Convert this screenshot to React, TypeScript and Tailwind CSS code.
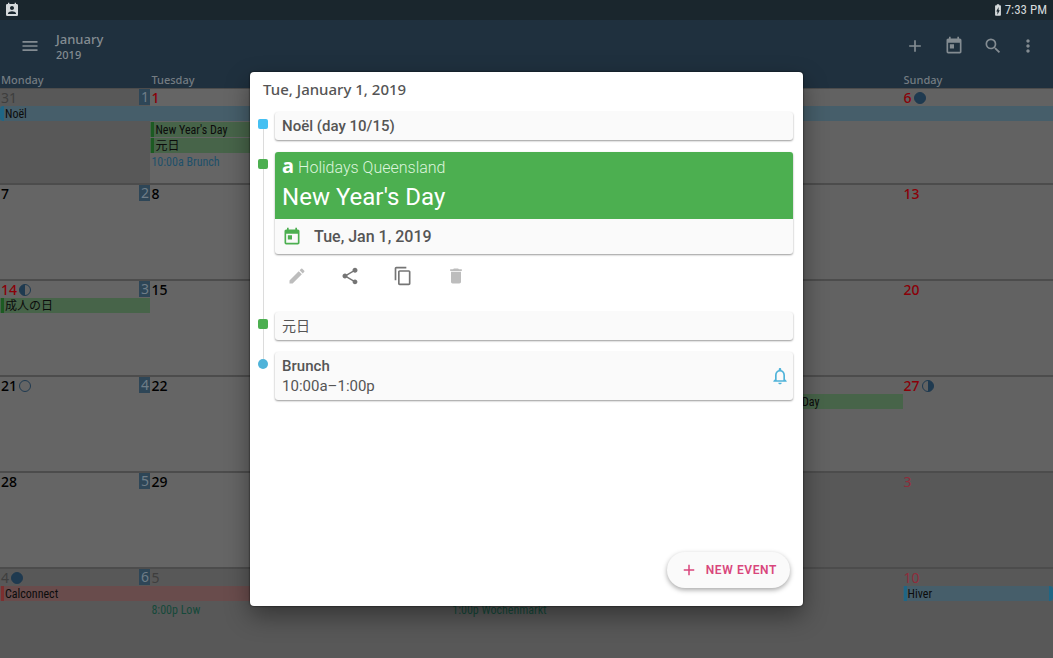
import clsx from "clsx"
import type { ReactNode } from "react"
import {
  MdAdd,
  MdBatteryChargingFull,
  MdContentCopy,
  MdDelete,
  MdEdit,
  MdMenu,
  MdMoreVert,
  MdNotificationsNone,
  MdPermContactCalendar,
  MdSearch,
  MdShare,
  MdToday,
} from "react-icons/md"

type Phase = "new" | "first" | "full" | "last"
type Tone = "blue" | "green" | "red"

interface Entry {
  label?: string
  tone?: Tone
  start?: boolean
  before?: boolean
  after?: boolean
  text?: "blue" | "green"
}

// Days that lie under the open dialog carry no number
interface Day {
  n?: number
  other?: boolean
  holiday?: boolean
  moon?: Phase
  entries?: Entry[]
}

interface Week {
  no: number
  days: Day[]
}

const WEEKDAYS = ["Monday", "Tuesday", "", "", "", "", "Sunday"]

const noel: Entry = { tone: "blue" }
const calconnect: Entry = { tone: "red" }

const WEEKS: Week[] = [
  {
    no: 1,
    days: [
      { n: 31, other: true, entries: [{ label: "Noël", tone: "blue", before: true }] },
      {
        n: 1,
        holiday: true,
        entries: [
          noel,
          { label: "New Year's Day", tone: "green", start: true },
          { label: "元日", tone: "green", start: true },
          { label: "10:00a Brunch", text: "blue" },
        ],
      },
      { entries: [noel] },
      { entries: [noel] },
      { entries: [noel] },
      { entries: [noel] },
      { n: 6, moon: "new", entries: [noel] },
    ],
  },
  { no: 2, days: [{ n: 7 }, { n: 8 }, {}, {}, {}, {}, { n: 13 }] },
  {
    no: 3,
    days: [
      { n: 14, holiday: true, moon: "first", entries: [{ label: "成人の日", tone: "green", start: true }] },
      { n: 15 },
      {},
      {},
      {},
      {},
      { n: 20 },
    ],
  },
  {
    no: 4,
    days: [
      { n: 21, moon: "full" },
      { n: 22 },
      {},
      {},
      {},
      { entries: [{ label: "Australia Day", tone: "green", start: true }] },
      { n: 27, moon: "last" },
    ],
  },
  {
    no: 5,
    days: [{ n: 28 }, { n: 29 }, {}, {}, { other: true }, { other: true }, { n: 3, other: true }],
  },
  {
    no: 6,
    days: [
      { n: 4, other: true, moon: "new", entries: [{ label: "Calconnect", tone: "red", start: true }] },
      { n: 5, other: true, entries: [calconnect, { label: "8:00p Low", text: "green" }] },
      { other: true, entries: [calconnect] },
      { other: true, entries: [calconnect, { label: "1:00p Wochenmarkt", text: "green" }] },
      { other: true, entries: [calconnect] },
      { other: true },
      { n: 10, other: true, entries: [{ label: "Hiver", tone: "blue", start: true, after: true }] },
    ],
  },
]

const BAR: Record<Tone, string> = {
  blue: "bg-[#465e6a]",
  green: "bg-[#476449]",
  red: "bg-[#694c4c]",
}

const ACCENT: Record<Tone, string> = {
  blue: "bg-[#1f6685]",
  green: "bg-[#1c5a22]",
  red: "bg-[#7c2f2f]",
}

function Moon({ phase }: { phase: Phase }) {
  return (
    <svg viewBox="0 0 12 12" className="size-3 text-[#1f3a50]" aria-hidden="true">
      <circle cx="6" cy="6" r="5.5" fill={phase === "new" ? "currentColor" : "none"} stroke="currentColor" />
      {phase === "first" && <path d="M6 .5a5.5 5.5 0 0 0 0 11z" fill="currentColor" />}
      {phase === "last" && <path d="M6 .5a5.5 5.5 0 0 1 0 11z" fill="currentColor" />}
    </svg>
  )
}

function EntryRow({ entry }: { entry: Entry }) {
  if (!entry.tone) {
    return (
      <div
        className={clsx(
          "h-4 overflow-hidden pl-px whitespace-nowrap",
          entry.text === "blue" ? "text-[#20506a]" : "text-[#16493a]",
        )}
      >
        {entry.label}
      </div>
    )
  }

  return (
    <div className={clsx("mb-px flex h-[15px] overflow-hidden whitespace-nowrap", BAR[entry.tone])}>
      {entry.start && <span className={clsx("mr-px ml-px w-[3px] shrink-0", ACCENT[entry.tone])} />}
      {entry.before && <span className={clsx("mr-px w-1 shrink-0 rounded-l-full", ACCENT[entry.tone])} />}
      <span className="text-[#0c0c0c]">{entry.label}</span>
      {entry.after && <span className={clsx("ml-auto w-1 shrink-0 rounded-r-full", ACCENT[entry.tone])} />}
    </div>
  )
}

function DayCell({ day, column, week }: { day: Day; column: number; week: number }) {
  const red = column === 6 || day.holiday

  return (
    <td
      className={clsx(
        "border-[#4c4c4c] p-0 align-top",
        week === 1 ? "border-t" : "border-t-2",
        day.other ? "bg-[#585858]" : column > 4 ? "bg-[#626262]" : "bg-[#656565]",
      )}
    >
      <div className="flex h-[17px] items-center gap-0.5 pl-px">
        <span
          className={clsx(
            "pt-px text-sm leading-4",
            day.other ? "font-normal" : "font-medium",
            red ? (day.other ? "text-[#8f2c3b]" : "text-[#8a0008]") : day.other ? "text-[#3e3e3e]" : "text-black",
          )}
        >
          {day.n}
        </span>
        {day.moon && <Moon phase={day.moon} />}
        {column === 0 && (
          <span className="ml-auto w-[11px] self-start bg-[#2e4657] text-center text-sm leading-4 text-[#6f7d87]">
            {week}
          </span>
        )}
      </div>
      <div className="font-['Roboto_Condensed',Roboto,'Noto_Sans_CJK_JP',sans-serif] text-xs leading-4">
        {day.entries?.map((entry, i) => (
          <EntryRow key={i} entry={entry} />
        ))}
      </div>
    </td>
  )
}

function StatusBar() {
  return (
    <div className="flex h-5 shrink-0 items-center justify-between bg-[#1a262d] pr-1.5 pl-1 text-[#d5d9db]">
      <MdPermContactCalendar className="size-4" />
      <span className="flex items-center font-['Roboto_Condensed',Roboto,sans-serif] text-[13px]">
        <MdBatteryChargingFull className="size-3.5" />
        7:33 PM
      </span>
    </div>
  )
}

function ToolbarButton({ label, children }: { label: string; children: ReactNode }) {
  return (
    <button type="button" aria-label={label} className="flex size-5 items-center justify-center">
      {children}
    </button>
  )
}

function Toolbar() {
  return (
    <header className="flex h-[52px] shrink-0 items-center bg-[#1f303e] pr-[15px] pl-5 text-[#848c92]">
      <ToolbarButton label="Menu">
        <MdMenu className="size-5" />
      </ToolbarButton>
      <h1 className="ml-4 flex flex-col pt-0.5 font-medium">
        <span className="text-[13px] leading-4">January</span>
        <span className="text-[11px] leading-4">2019</span>
      </h1>
      <div className="ml-auto flex items-center gap-[19px]">
        <ToolbarButton label="Add event">
          <MdAdd className="size-5" />
        </ToolbarButton>
        <ToolbarButton label="Go to today">
          <MdToday className="size-5" />
        </ToolbarButton>
        <ToolbarButton label="Search">
          <MdSearch className="size-5" />
        </ToolbarButton>
        <button type="button" aria-label="More options" className="-ml-1">
          <MdMoreVert className="size-5" />
        </button>
      </div>
    </header>
  )
}

function MonthGrid() {
  return (
    <table className="w-full table-fixed border-separate border-spacing-0">
      <thead>
        <tr>
          {WEEKDAYS.map((name, column) => (
            <th
              key={column}
              scope="col"
              className="h-4 bg-[#1f303e] p-0 pl-px text-left text-[11px] leading-4 font-medium text-[#747c82]"
            >
              {name}
            </th>
          ))}
        </tr>
      </thead>
      <tbody>
        {WEEKS.map((week) => (
          <tr key={week.no} className={week.no === 1 ? "h-[95px]" : "h-24"}>
            {week.days.map((day, column) => (
              <DayCell key={column} day={day} column={column} week={week.no} />
            ))}
          </tr>
        ))}
      </tbody>
    </table>
  )
}

interface TimelineItemProps {
  marker: string
  first?: boolean
  last?: boolean
  children: ReactNode
}

function TimelineItem({ marker, first, last, children }: TimelineItemProps) {
  return (
    <li className="flex gap-[7px]">
      <div className="flex w-2.5 shrink-0 flex-col items-center">
        <span className={clsx("h-[7px] w-px", !first && "bg-[#dcdcdc]")} />
        <span className={clsx("size-2.5", marker)} />
        {!last && <span className="w-px flex-1 bg-[#dcdcdc]" />}
      </div>
      <div className={clsx("min-w-0 flex-1", !last && "pb-3")}>{children}</div>
    </li>
  )
}

const CARD = "rounded-[3px] bg-[#fafafa] shadow-[0_1px_2px_rgba(0,0,0,0.4)]"

function AgendaDialog() {
  return (
    <section
      role="dialog"
      aria-labelledby="agenda-title"
      className="flex h-[83.7%] w-[52.5%] flex-col rounded-sm bg-white pr-2.5 pl-2 font-[Roboto,'Noto_Sans_CJK_JP',sans-serif] text-[#555] shadow-[0_0_2px_rgba(0,0,0,0.9),0_10px_24px_rgba(0,0,0,0.4)]"
    >
      <h2
        id="agenda-title"
        className="h-10 pt-[7px] pl-[5px] font-['Noto_Sans',sans-serif] text-[15px] leading-5 font-medium"
      >
        Tue, January 1, 2019
      </h2>

      <ol>
        <TimelineItem marker="rounded-xs bg-[#45c0f2]" first>
          <div className={clsx(CARD, "h-7 px-[7px] text-[15px] leading-7 font-medium")}>Noël (day 10/15)</div>
        </TimelineItem>

        <TimelineItem marker="rounded-xs bg-[#4caf50]">
          <article className={clsx(CARD, "overflow-hidden")}>
            <div className="bg-[#4caf50] px-[7px] pt-1 pb-1 text-white">
              <p className="flex items-center gap-1 text-base leading-6 font-light text-[#dcf5dd]">
                <span className="w-3 self-start font-['Noto_Sans',sans-serif] text-xl leading-5 font-bold text-white">
                  a
                </span>
                Holidays Queensland
              </p>
              <h3 className="text-2xl leading-[35px]">New Year&apos;s Day</h3>
            </div>
            <p className="flex h-[35px] items-center gap-3 px-[7px] text-base font-medium">
              <MdToday className="size-5 text-[#4caf50]" />
              Tue, Jan 1, 2019
            </p>
          </article>
          <div className="flex h-[46px] items-center gap-[33px] pb-0.5 pl-3">
            <button type="button" aria-label="Edit" disabled className="text-[#bdbdbd]">
              <MdEdit className="size-5" />
            </button>
            <button type="button" aria-label="Share" className="text-[#757575]">
              <MdShare className="size-5" />
            </button>
            <button type="button" aria-label="Copy" className="text-[#757575]">
              <MdContentCopy className="size-5" />
            </button>
            <button type="button" aria-label="Delete" disabled className="text-[#bdbdbd]">
              <MdDelete className="size-5" />
            </button>
          </div>
        </TimelineItem>

        <TimelineItem marker="rounded-xs bg-[#4caf50]">
          <div className={clsx(CARD, "h-7 px-[7px] text-sm leading-7")}>元日</div>
        </TimelineItem>

        <TimelineItem marker="rounded-full bg-[#4fb3d9]" last>
          <div className={clsx(CARD, "flex items-center justify-between py-1 pr-[3px] pl-[7px] text-[15px] leading-5")}>
            <div>
              <p className="font-medium">Brunch</p>
              <p>10:00a–1:00p</p>
            </div>
            <MdNotificationsNone className="size-5 text-[#4fb3d9]" />
          </div>
        </TimelineItem>
      </ol>

      <button
        type="button"
        className="mt-auto mr-[3px] mb-[18px] flex h-9 items-center gap-2 self-end rounded-full bg-[#fafafa] px-[13px] text-xs font-semibold tracking-wider text-[#d9467c] shadow-[0_2px_5px_rgba(0,0,0,0.35)]"
      >
        <MdAdd className="size-[18px]" />
        NEW EVENT
      </button>
    </section>
  )
}

export default function App() {
  return (
    <div className="relative flex h-screen flex-col overflow-hidden bg-[#585858] font-['Noto_Sans','Noto_Sans_CJK_JP',sans-serif]">
      <StatusBar />
      <Toolbar />
      <main className="min-h-0 flex-1 overflow-hidden">
        <MonthGrid />
      </main>
      <div className="absolute inset-x-0 top-5 bottom-0 flex items-center justify-center">
        <AgendaDialog />
      </div>
    </div>
  )
}
